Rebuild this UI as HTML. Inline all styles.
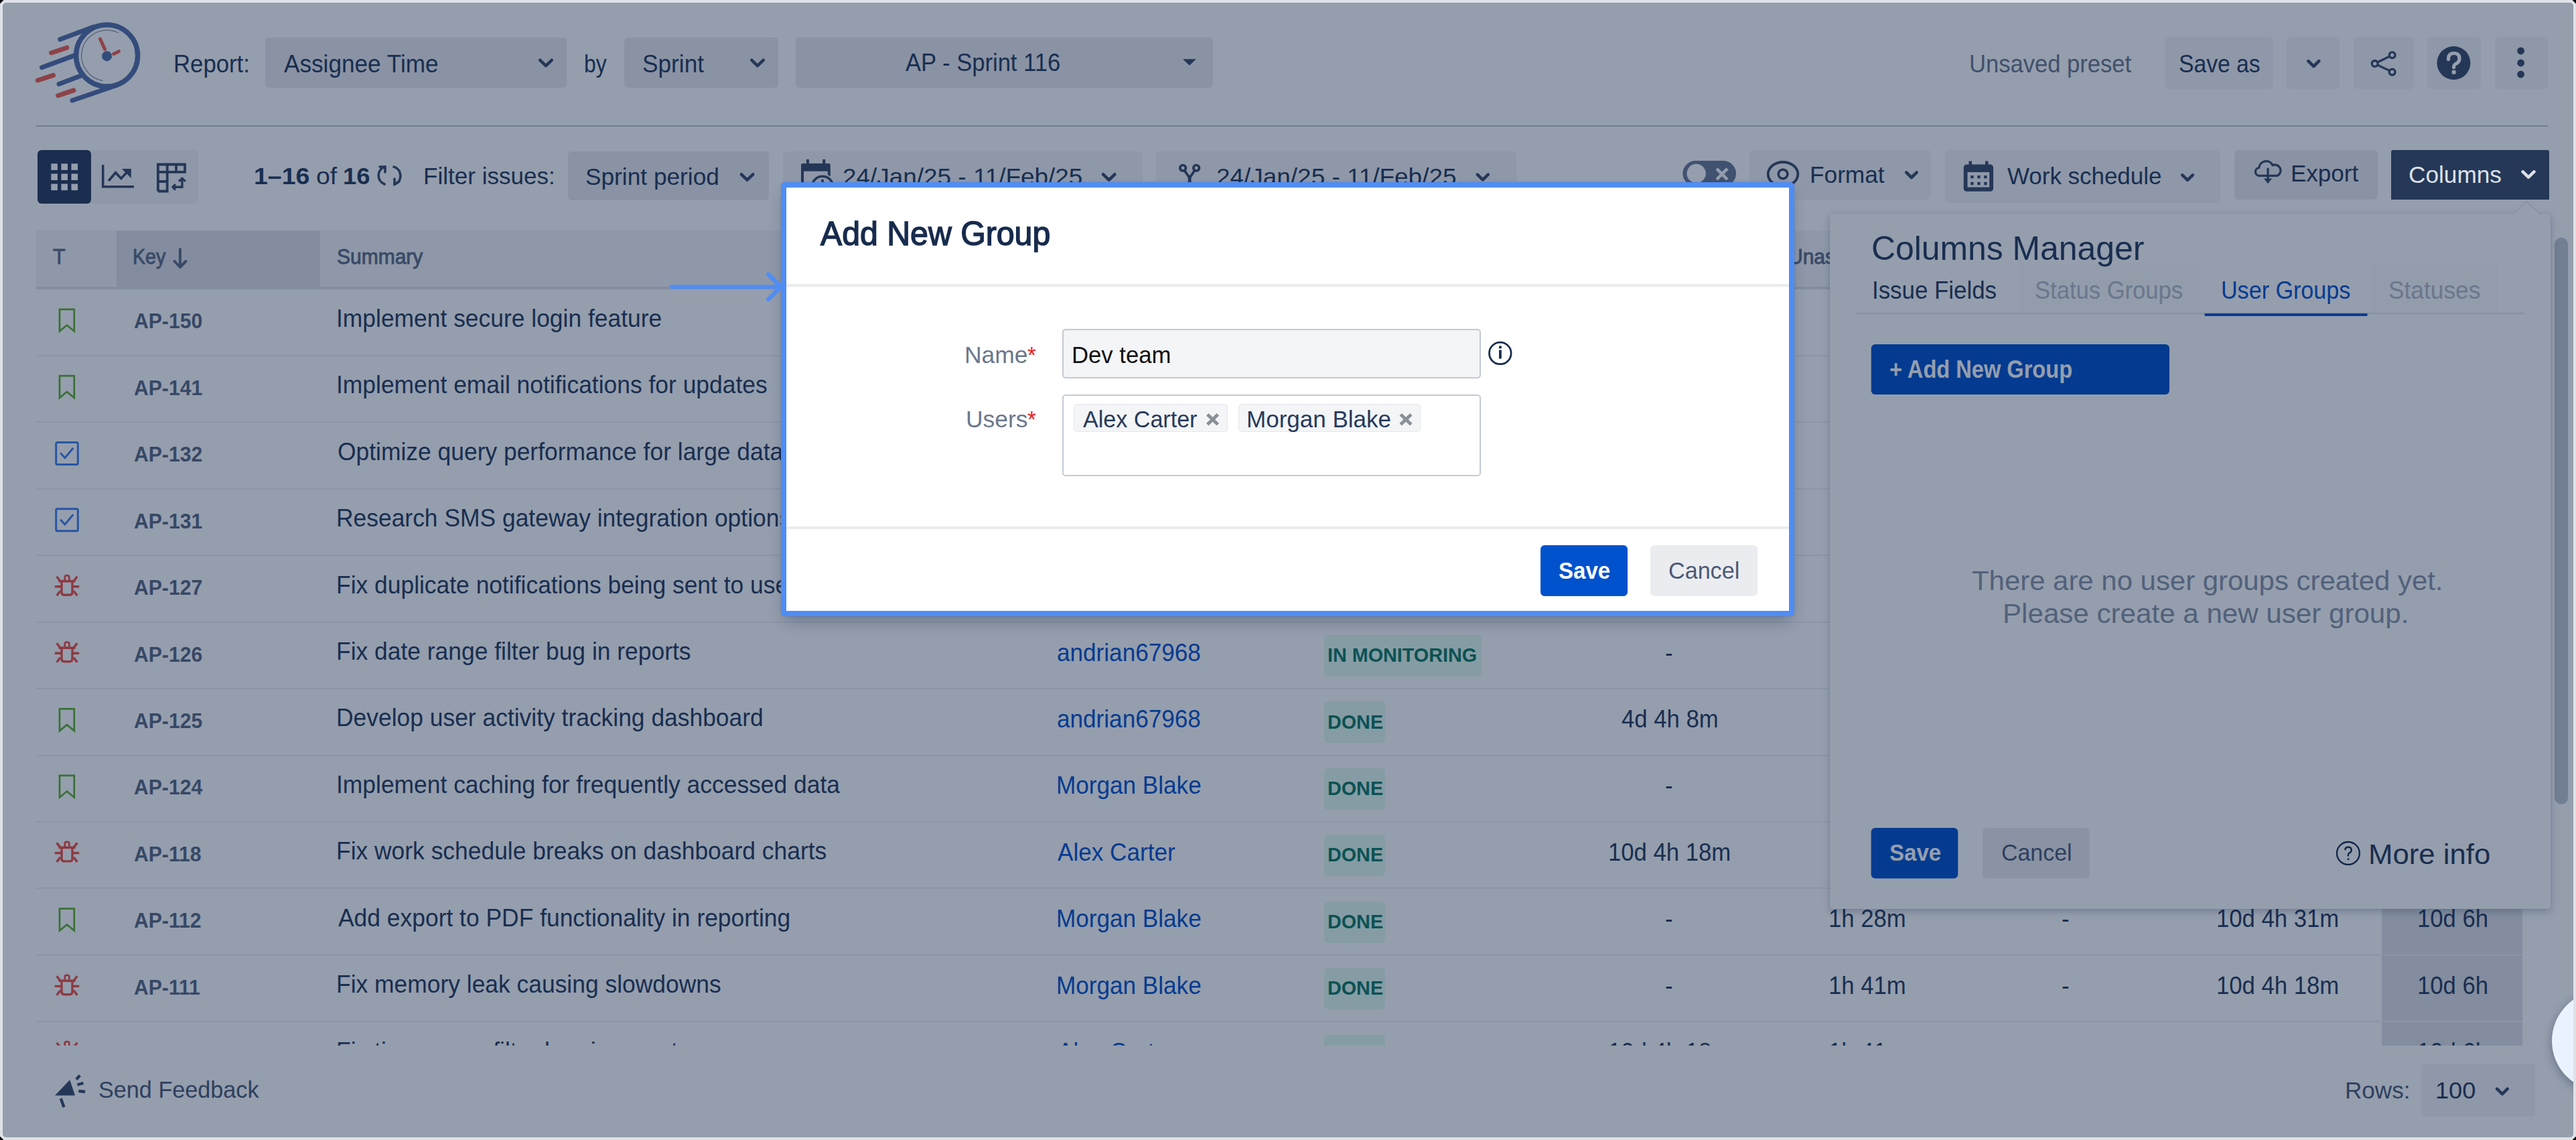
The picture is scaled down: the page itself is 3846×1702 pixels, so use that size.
<!DOCTYPE html>
<html><head><meta charset="utf-8"><style>
html,body{margin:0;padding:0;}
body{width:3846px;height:1702px;background:#000;position:relative;overflow:hidden;font-family:"Liberation Sans", sans-serif;}
.t{position:absolute;white-space:nowrap;line-height:1;transform-origin:0 0;}
.r{position:absolute;}
.full{position:absolute;left:0;top:0;}
#frame{position:absolute;left:0;top:0;width:3846px;height:1702px;background:#dfe1e6;clip-path:polygon(5.5px 0,calc(100% - 5.5px) 0,100% 5.5px,100% calc(100% - 5.5px),calc(100% - 5.5px) 100%,5.5px 100%,0 calc(100% - 5.5px),0 5.5px);}
#page{position:absolute;left:4px;top:4px;width:3838px;height:1694px;border-radius:5px;overflow:hidden;background:#fff;}
#inner{position:absolute;left:-4px;top:-4px;width:3846px;height:1702px;}
#clip{position:absolute;left:0;top:432px;width:3846px;height:1129px;overflow:hidden;}
#clipin{position:absolute;left:0;top:-432px;width:3846px;height:1702px;}
</style></head><body>
<div id="frame"></div>
<div id="page"><div id="inner">
<div class="r" style="left:396px;top:56px;width:450.00px;height:75.00px;background:#ebecf0;border-radius:6px;"></div><div class="r" style="left:932px;top:56px;width:229.60px;height:75.00px;background:#ebecf0;border-radius:6px;"></div><div class="r" style="left:1188px;top:56px;width:623.00px;height:75.00px;background:#ebecf0;border-radius:6px;"></div><div class="r" style="left:3232px;top:55px;width:162.00px;height:78.00px;background:#f4f5f7;border-radius:6px;"></div><div class="r" style="left:3414px;top:55px;width:79.00px;height:78.00px;background:#f4f5f7;border-radius:6px;"></div><div class="r" style="left:3514px;top:55px;width:90.00px;height:78.00px;background:#f4f5f7;border-radius:6px;"></div><div class="r" style="left:3624px;top:55px;width:80.00px;height:78.00px;background:#f4f5f7;border-radius:6px;"></div><div class="r" style="left:3724.5px;top:55px;width:79.00px;height:78.00px;background:#f4f5f7;border-radius:6px;"></div><div class="r" style="left:54px;top:187.2px;width:3750.00px;height:2.00px;background:#c1c7d0;border-radius:0px;"></div><div class="r" style="left:56px;top:224px;width:240.00px;height:80.00px;background:#f4f5f7;border-radius:6px;"></div><div class="r" style="left:56px;top:224px;width:80.00px;height:80.00px;background:#2a3b5c;border-radius:6px;"></div><div class="r" style="left:848px;top:226px;width:300.00px;height:73.00px;background:#ebecf0;border-radius:6px;"></div><div class="r" style="left:1168.5px;top:226px;width:537.00px;height:73.00px;background:#f4f5f7;border-radius:6px;"></div><div class="r" style="left:1726px;top:226px;width:538.00px;height:73.00px;background:#f4f5f7;border-radius:6px;"></div><div class="r" style="left:2612px;top:224px;width:271.40px;height:73.50px;background:#f4f5f7;border-radius:6px;"></div><div class="r" style="left:2904px;top:224px;width:411.20px;height:79.20px;background:#f4f5f7;border-radius:6px;"></div><div class="r" style="left:3336.3px;top:224px;width:213.40px;height:73.70px;background:#ebecf0;border-radius:6px;"></div><div class="r" style="left:54px;top:344px;width:3712.00px;height:84.00px;background:#f4f5f7;border-radius:0px;"></div><div class="r" style="left:174px;top:344px;width:304.00px;height:84.00px;background:#dfe1e6;border-radius:0px;"></div><div class="r" style="left:3556.3px;top:344px;width:209.40px;height:84.00px;background:#dfe1e6;border-radius:0px;"></div><div class="r" style="left:54px;top:428px;width:3712.00px;height:4.00px;background:#dfe1e6;border-radius:0px;"></div><div class="r" style="left:3615.3px;top:1588px;width:170.00px;height:78.80px;background:#f4f5f7;border-radius:6px;"></div>
<svg class="full" width="3846" height="1702" viewBox="0 0 3846 1702"><g fill="none" stroke-linecap="round"><circle cx="159.6" cy="83" r="46" stroke="#5570a8" stroke-width="7.5"/><circle cx="159.6" cy="83" r="38" stroke="#9aa3b3" stroke-width="1.5" stroke-dasharray="130 200" transform="rotate(100 159.6 83)"/><line x1="89.7" y1="58.8" x2="140" y2="40" stroke="#5570a8" stroke-width="7"/><line x1="62.5" y1="100.7" x2="111" y2="82.9" stroke="#5570a8" stroke-width="7"/><line x1="88" y1="125.6" x2="121" y2="113" stroke="#5570a8" stroke-width="7"/><line x1="108" y1="150" x2="175" y2="127" stroke="#5570a8" stroke-width="7"/><line x1="76.5" y1="79" x2="99.8" y2="71.2" stroke="#f0604f" stroke-width="7"/><line x1="56.3" y1="120" x2="79.6" y2="112.4" stroke="#f0604f" stroke-width="7"/><line x1="86.6" y1="142.7" x2="109.9" y2="134.9" stroke="#f0604f" stroke-width="7"/><line x1="149.5" y1="58" x2="156.5" y2="73.6" stroke="#f0604f" stroke-width="5"/><line x1="169.7" y1="80.6" x2="177.4" y2="76.7" stroke="#f0604f" stroke-width="5"/><circle cx="159.6" cy="83.7" r="7.5" fill="#5570a8" stroke="none"/></g><polyline points="806.3,89.8 815.0,98.2 823.7,89.8" fill="none" stroke="#3b4b69" stroke-width="4.6" stroke-linecap="round" stroke-linejoin="round"/><polyline points="1122.3,89.8 1131.0,98.2 1139.7,89.8" fill="none" stroke="#3b4b69" stroke-width="4.6" stroke-linecap="round" stroke-linejoin="round"/><polygon points="1766,88.3 1785.8,88.3 1775.9,97.8" fill="#3b4b69"/><polyline points="3446.3,91.2 3454.3,99.0 3462.3,91.2" fill="none" stroke="#3b4b69" stroke-width="4.6" stroke-linecap="round" stroke-linejoin="round"/><g fill="none" stroke="#3b4b69" stroke-width="3.3"><circle cx="3545.6" cy="94.9" r="4.4"/><circle cx="3571.6" cy="82.3" r="4.4"/><circle cx="3571.6" cy="107.6" r="4.4"/><line x1="3549.6" y1="92.9" x2="3567.6" y2="84.3"/><line x1="3549.6" y1="96.9" x2="3567.6" y2="105.6"/></g><circle cx="3663.4" cy="94" r="25" fill="#3b4b69"/><path d="M3655.5 88.5 q0 -9 8 -9 q8.5 0 8.5 8 q0 5 -5 7.5 q-3.5 1.8 -3.5 5.5" fill="none" stroke="#fff" stroke-width="5.2" stroke-linecap="round"/><circle cx="3663.6" cy="107.8" r="3.2" fill="#fff"/><circle cx="3763.6" cy="76" r="5.4" fill="#3b4b69"/><circle cx="3763.6" cy="94" r="5.4" fill="#3b4b69"/><circle cx="3763.6" cy="111" r="5.4" fill="#3b4b69"/><rect x="76.3" y="244.3" width="9.6" height="9.6" fill="#ffffff"/><rect x="76.3" y="259.4" width="9.6" height="9.6" fill="#ffffff"/><rect x="76.3" y="274.5" width="9.6" height="9.6" fill="#ffffff"/><rect x="91.4" y="244.3" width="9.6" height="9.6" fill="#ffffff"/><rect x="91.4" y="259.4" width="9.6" height="9.6" fill="#ffffff"/><rect x="91.4" y="274.5" width="9.6" height="9.6" fill="#ffffff"/><rect x="106.5" y="244.3" width="9.6" height="9.6" fill="#ffffff"/><rect x="106.5" y="259.4" width="9.6" height="9.6" fill="#ffffff"/><rect x="106.5" y="274.5" width="9.6" height="9.6" fill="#ffffff"/><g fill="none" stroke="#3b4b69" stroke-width="3.6" stroke-linejoin="miter"><polyline points="153.7,246 153.7,278.8 200,278.8"/><polyline points="162.1,270 172.6,257.8 180.8,266.4 192,254.5"/></g><polygon points="181.9,252.1 195.8,252.1 195.8,266" fill="#3b4b69"/><g fill="none" stroke="#3b4b69" stroke-width="3.8"><path d="M235.9 285.5 V245.5 H276 V256.8 H235.9 M249.7 243.6 V285.5 H235.9 M263 245.5 V256.8 M235.9 271 H249.7"/><path d="M260 279.2 H271.9 V267" stroke-width="3.4"/><polyline points="267,270.9 271.9,266.2 276.9,270.9" stroke-width="3.2"/><polyline points="261.9,275 257.8,279.2 261.9,283.6" stroke-width="3.2"/></g><g fill="none" stroke="#3b4b69" stroke-width="3.6" stroke-linecap="round"><path d="M574 249 A14 14 0 0 0 574 275"/><path d="M588 249 A14 14 0 0 1 590 275"/><polyline points="567,249 575,249 575,257" /><polyline points="596,271 589,275 589,267"/></g><polyline points="1106.9,260.3 1115.5,268.7 1124.2,260.3" fill="none" stroke="#3b4b69" stroke-width="4.6" stroke-linecap="round" stroke-linejoin="round"/><g fill="#3b4b69"><rect x="1196" y="243.9" width="43.8" height="44" rx="2.5"/><rect x="1203.9" y="237.9" width="4" height="8"/><rect x="1228.2" y="237.9" width="4" height="8"/></g><rect x="1200" y="255.7" width="35.8" height="28" fill="#f4f5f7"/><circle cx="1228" cy="278.8" r="19.3" fill="#f4f5f7"/><circle cx="1228" cy="278.8" r="15.6" fill="none" stroke="#3b4b69" stroke-width="3.6"/><rect x="1226.2" y="267.8" width="3.6" height="9" fill="#3b4b69"/><polyline points="1647.0,260.3 1655.7,268.7 1664.3,260.3" fill="none" stroke="#3b4b69" stroke-width="4.6" stroke-linecap="round" stroke-linejoin="round"/><g fill="none" stroke="#3b4b69" stroke-width="3.7"><circle cx="1766.1" cy="250.8" r="4.3"/><circle cx="1786.1" cy="250.8" r="4.3"/><path d="M1768.6 254.6 L1776.1 265.5 L1783.6 254.6"/><path d="M1776.1 264 V285" stroke-width="4.8"/></g><polyline points="2205.9,260.7 2213.8,268.3 2221.7,260.7" fill="none" stroke="#3b4b69" stroke-width="4.6" stroke-linecap="round" stroke-linejoin="round"/><rect x="2512.4" y="240.1" width="79.6" height="38" rx="19" fill="#6b7a94"/><circle cx="2532.6" cy="259" r="14.2" fill="#ffffff"/><g stroke="#ffffff" stroke-width="4.6" stroke-linecap="butt"><line x1="2563" y1="251.8" x2="2579" y2="268"/><line x1="2579" y1="251.8" x2="2563" y2="268"/></g><g fill="none" stroke="#3b4b69" stroke-width="3.8"><ellipse cx="2662" cy="260" rx="22.3" ry="18"/><circle cx="2662" cy="259.9" r="6.8" stroke-width="3.6"/></g><polyline points="2846.1,257.4 2853.9,265.0 2861.7,257.4" fill="none" stroke="#3b4b69" stroke-width="4.6" stroke-linecap="round" stroke-linejoin="round"/><g fill="#3b4b69"><rect x="2931.7" y="245.5" width="44.3" height="40.2" rx="4.5"/><rect x="2939.5" y="240.5" width="4.5" height="8"/><rect x="2964" y="240.5" width="4.5" height="8"/></g><rect x="2937.5" y="257" width="32.7" height="22.5" fill="#f4f5f7"/><rect x="2942.2" y="262.0" width="4.4" height="4.4" fill="#3b4b69"/><rect x="2942.2" y="271.8" width="4.4" height="4.4" fill="#3b4b69"/><rect x="2952.2" y="262.0" width="4.4" height="4.4" fill="#3b4b69"/><rect x="2952.2" y="271.8" width="4.4" height="4.4" fill="#3b4b69"/><rect x="2962.2" y="262.0" width="4.4" height="4.4" fill="#3b4b69"/><rect x="2962.2" y="271.8" width="4.4" height="4.4" fill="#3b4b69"/><polyline points="3258.3,261.4 3266.0,268.8 3273.7,261.4" fill="none" stroke="#3b4b69" stroke-width="4.6" stroke-linecap="round" stroke-linejoin="round"/><g fill="none" stroke="#3b4b69" stroke-width="3.3" stroke-linejoin="round"><path d="M3400 262.3 H3372.5 A6 6 0 0 1 3372.8 250.4 A10.6 10.6 0 0 1 3393 246.8 A8.3 8.3 0 0 1 3400 262.3 Z"/><line x1="3386" y1="250.7" x2="3386" y2="268"/></g><polygon points="3379.8,266.5 3392.2,266.5 3386,274.3" fill="#3b4b69"/><g fill="none" stroke="#5e6c84" stroke-width="4" stroke-linecap="round" stroke-linejoin="round"><line x1="268.9" y1="372" x2="268.9" y2="398"/><polyline points="260.5,390 268.9,399 277.5,390"/></g><g fill="#3b4b69"><path d="M82 1635.5 L104.3 1612.3 L112 1635.5 Z"/></g><g stroke="#3b4b69" stroke-width="4.3" stroke-linecap="butt"><line x1="113.9" y1="1611.5" x2="119.3" y2="1605.5"/><line x1="115.5" y1="1619.5" x2="124.5" y2="1617"/><line x1="117.3" y1="1628.8" x2="127" y2="1630"/><line x1="90.8" y1="1640" x2="95.5" y2="1653"/></g><polyline points="3728.1,1625.7 3735.9,1633.3 3743.7,1625.7" fill="none" stroke="#3b4b69" stroke-width="4.6" stroke-linecap="round" stroke-linejoin="round"/><rect x="3814" y="354.7" width="20" height="846" rx="10" fill="#c1c7d0"/></svg>
<div class="t" style="left:259.15px;top:77.60px;font-size:36.5px;color:#263a5c;transform:scaleX(0.9511);">Report:</div><div class="t" style="left:424.00px;top:78.20px;font-size:36.5px;color:#263a5c;transform:scaleX(0.9634);">Assignee Time</div><div class="t" style="left:872.25px;top:77.90px;font-size:36.5px;color:#263a5c;transform:scaleX(0.8740);">by</div><div class="t" style="left:959.03px;top:78.10px;font-size:36.5px;color:#263a5c;transform:scaleX(0.9659);">Sprint</div><div class="t" style="left:1352.00px;top:75.76px;font-size:36.2px;color:#263a5c;transform:scaleX(0.9549);">AP - Sprint 116</div><div class="t" style="left:2939.71px;top:77.50px;font-size:36.5px;color:#6b778c;transform:scaleX(0.9471);">Unsaved preset</div><div class="t" style="left:3253.08px;top:77.70px;font-size:36.5px;color:#263a5c;transform:scaleX(0.9226);">Save as</div><div class="t" style="left:379.49px;top:246.36px;font-size:35.6px;color:#263a5c;font-weight:700;transform:scaleX(1.0529);">1–16</div><div class="t" style="left:471.65px;top:246.36px;font-size:35.6px;color:#263a5c;transform:scaleX(1.0526);">of</div><div class="t" style="left:512.26px;top:246.36px;font-size:35.6px;color:#263a5c;font-weight:700;transform:scaleX(1.0194);">16</div><div class="t" style="left:632.03px;top:246.36px;font-size:35.6px;color:#263a5c;transform:scaleX(0.9857);">Filter issues:</div><div class="t" style="left:874.41px;top:246.66px;font-size:35.6px;color:#263a5c;transform:scaleX(0.9908);">Sprint period</div><div class="t" style="left:1257.96px;top:247.16px;font-size:35.6px;color:#263a5c;transform:scaleX(1.0373);">24/Jan/25 - 11/Feb/25</div><div class="t" style="left:1815.96px;top:247.16px;font-size:35.6px;color:#263a5c;transform:scaleX(1.0376);">24/Jan/25 - 11/Feb/25</div><div class="t" style="left:2702.44px;top:244.11px;font-size:35.9px;color:#263a5c;transform:scaleX(0.9821);">Format</div><div class="t" style="left:2996.50px;top:245.91px;font-size:35.9px;color:#263a5c;transform:scaleX(0.9730);">Work schedule</div><div class="t" style="left:3420.45px;top:242.21px;font-size:35.9px;color:#263a5c;transform:scaleX(0.9759);">Export</div><div class="t" style="left:79.00px;top:368.81px;font-size:30.7px;color:#5e6c84;transform:scaleX(0.9895);-webkit-text-stroke:0.9px #5e6c84;">T</div><div class="t" style="left:198.14px;top:368.81px;font-size:30.7px;color:#5e6c84;transform:scaleX(0.9314);-webkit-text-stroke:0.9px #5e6c84;">Key</div><div class="t" style="left:503.02px;top:368.81px;font-size:30.7px;color:#5e6c84;transform:scaleX(0.9775);-webkit-text-stroke:0.9px #5e6c84;">Summary</div><div class="t" style="left:2670.05px;top:368.81px;font-size:30.7px;color:#5e6c84;transform:scaleX(0.9775);-webkit-text-stroke:0.9px #5e6c84;">Unassigned time</div><div class="t" style="left:146.74px;top:1610.10px;font-size:35.8px;color:#4a5a76;transform:scaleX(0.9554);">Send Feedback</div><div class="t" style="left:3501.04px;top:1610.90px;font-size:35.8px;color:#4a5a76;transform:scaleX(0.9798);">Rows:</div><div class="t" style="left:3635.68px;top:1610.90px;font-size:35.8px;color:#263a5c;transform:scaleX(1.0085);">100</div>
<div id="clip"><div id="clipin"><div class="r" style="left:3556.3px;top:432px;width:209.40px;height:1129.00px;background:#dfe1e6;border-radius:0px;"></div><div class="r" style="left:54px;top:530.0px;width:3712.00px;height:2.00px;background:#eef0f2;border-radius:0px;"></div><div class="r" style="left:54px;top:629.4300000000001px;width:3712.00px;height:2.00px;background:#eef0f2;border-radius:0px;"></div><div class="r" style="left:54px;top:728.86px;width:3712.00px;height:2.00px;background:#eef0f2;border-radius:0px;"></div><div class="r" style="left:54px;top:828.29px;width:3712.00px;height:2.00px;background:#eef0f2;border-radius:0px;"></div><div class="r" style="left:54px;top:927.72px;width:3712.00px;height:2.00px;background:#eef0f2;border-radius:0px;"></div><div class="r" style="left:54px;top:1027.15px;width:3712.00px;height:2.00px;background:#eef0f2;border-radius:0px;"></div><div class="r" style="left:54px;top:1126.58px;width:3712.00px;height:2.00px;background:#eef0f2;border-radius:0px;"></div><div class="r" style="left:54px;top:1226.01px;width:3712.00px;height:2.00px;background:#eef0f2;border-radius:0px;"></div><div class="r" style="left:54px;top:1325.44px;width:3712.00px;height:2.00px;background:#eef0f2;border-radius:0px;"></div><div class="r" style="left:54px;top:1424.8700000000001px;width:3712.00px;height:2.00px;background:#eef0f2;border-radius:0px;"></div><div class="r" style="left:54px;top:1524.3000000000002px;width:3712.00px;height:2.00px;background:#eef0f2;border-radius:0px;"></div><div class="r" style="left:1976.6px;top:948.0px;width:235.00px;height:61.80px;background:#e3fcef;border-radius:6px;"></div><div class="r" style="left:1976.6px;top:1047.43px;width:91.40px;height:61.80px;background:#e3fcef;border-radius:6px;"></div><div class="r" style="left:1976.6px;top:1146.86px;width:91.40px;height:61.80px;background:#e3fcef;border-radius:6px;"></div><div class="r" style="left:1976.6px;top:1246.29px;width:91.40px;height:61.80px;background:#e3fcef;border-radius:6px;"></div><div class="r" style="left:1976.6px;top:1345.72px;width:91.40px;height:61.80px;background:#e3fcef;border-radius:6px;"></div><div class="r" style="left:1976.6px;top:1445.15px;width:91.40px;height:61.80px;background:#e3fcef;border-radius:6px;"></div><div class="r" style="left:1976.6px;top:1544.58px;width:91.40px;height:61.80px;background:#e3fcef;border-radius:6px;"></div><svg class="full" width="3846" height="1702" viewBox="0 0 3846 1702"><path d="M89 461.8 H110.8 V494.5 L99.9 485.5 L89 494.5 Z" fill="none" stroke="#5fae2e" stroke-width="2.7" stroke-linejoin="miter"/><path d="M89 561.2 H110.8 V593.9 L99.9 584.9 L89 593.9 Z" fill="none" stroke="#5fae2e" stroke-width="2.7" stroke-linejoin="miter"/><rect x="83.7" y="660.4" width="32.6" height="33" rx="2" fill="none" stroke="#3f7ff0" stroke-width="3"/><polyline points="91.2,677.4 96.9,683.6 108.4,669.9" fill="none" stroke="#3f7ff0" stroke-width="3" stroke-linecap="square"/><rect x="83.7" y="759.8" width="32.6" height="33" rx="2" fill="none" stroke="#3f7ff0" stroke-width="3"/><polyline points="91.2,776.8 96.9,783.0 108.4,769.3" fill="none" stroke="#3f7ff0" stroke-width="3" stroke-linecap="square"/><g fill="none" stroke="#ef4f43" stroke-width="3.4" stroke-linecap="butt"><path d="M96.8 866.2 V861.4 Q96.8 859.2 100 859.2 Q103.3 859.2 103.3 861.4 V866.2" stroke-width="2.8"/><path d="M87.5 867.7 H112.5" stroke-width="3.6"/><path d="M92 867.7 V884.2 Q92 888.2 96 888.2 H104 Q108 888.2 108 884.2 V867.7"/><path d="M84.7 860.7 L90 867.7 M115.3 860.7 L110 867.7 M81.8 875.8 H92 M108 875.8 H118.2 M90 882.2 L84.7 889.2 M110 882.2 L115.3 889.2"/></g><g fill="none" stroke="#ef4f43" stroke-width="3.4" stroke-linecap="butt"><path d="M96.8 965.7 V960.9 Q96.8 958.7 100 958.7 Q103.3 958.7 103.3 960.9 V965.7" stroke-width="2.8"/><path d="M87.5 967.2 H112.5" stroke-width="3.6"/><path d="M92 967.2 V983.7 Q92 987.7 96 987.7 H104 Q108 987.7 108 983.7 V967.2"/><path d="M84.7 960.2 L90 967.2 M115.3 960.2 L110 967.2 M81.8 975.3 H92 M108 975.3 H118.2 M90 981.7 L84.7 988.7 M110 981.7 L115.3 988.7"/></g><path d="M89 1058.4 H110.8 V1091.1 L99.9 1082.1 L89 1091.1 Z" fill="none" stroke="#5fae2e" stroke-width="2.7" stroke-linejoin="miter"/><path d="M89 1157.8 H110.8 V1190.5 L99.9 1181.5 L89 1190.5 Z" fill="none" stroke="#5fae2e" stroke-width="2.7" stroke-linejoin="miter"/><g fill="none" stroke="#ef4f43" stroke-width="3.4" stroke-linecap="butt"><path d="M96.8 1263.9 V1259.1 Q96.8 1256.9 100 1256.9 Q103.3 1256.9 103.3 1259.1 V1263.9" stroke-width="2.8"/><path d="M87.5 1265.4 H112.5" stroke-width="3.6"/><path d="M92 1265.4 V1281.9 Q92 1285.9 96 1285.9 H104 Q108 1285.9 108 1281.9 V1265.4"/><path d="M84.7 1258.4 L90 1265.4 M115.3 1258.4 L110 1265.4 M81.8 1273.5 H92 M108 1273.5 H118.2 M90 1279.9 L84.7 1286.9 M110 1279.9 L115.3 1286.9"/></g><path d="M89 1356.7 H110.8 V1389.4 L99.9 1380.4 L89 1389.4 Z" fill="none" stroke="#5fae2e" stroke-width="2.7" stroke-linejoin="miter"/><g fill="none" stroke="#ef4f43" stroke-width="3.4" stroke-linecap="butt"><path d="M96.8 1462.8 V1458.0 Q96.8 1455.8 100 1455.8 Q103.3 1455.8 103.3 1458.0 V1462.8" stroke-width="2.8"/><path d="M87.5 1464.3 H112.5" stroke-width="3.6"/><path d="M92 1464.3 V1480.8 Q92 1484.8 96 1484.8 H104 Q108 1484.8 108 1480.8 V1464.3"/><path d="M84.7 1457.3 L90 1464.3 M115.3 1457.3 L110 1464.3 M81.8 1472.4 H92 M108 1472.4 H118.2 M90 1478.8 L84.7 1485.8 M110 1478.8 L115.3 1485.8"/></g><g fill="none" stroke="#ef4f43" stroke-width="3.4" stroke-linecap="butt"><path d="M96.8 1562.2 V1557.4 Q96.8 1555.2 100 1555.2 Q103.3 1555.2 103.3 1557.4 V1562.2" stroke-width="2.8"/><path d="M87.5 1563.7 H112.5" stroke-width="3.6"/><path d="M92 1563.7 V1580.2 Q92 1584.2 96 1584.2 H104 Q108 1584.2 108 1580.2 V1563.7"/><path d="M84.7 1556.7 L90 1563.7 M115.3 1556.7 L110 1563.7 M81.8 1571.8 H92 M108 1571.8 H118.2 M90 1578.2 L84.7 1585.2 M110 1578.2 L115.3 1585.2"/></g></svg><div class="t" style="left:200.30px;top:464.48px;font-size:30.5px;color:#5a6883;font-weight:700;transform:scaleX(0.9878);">AP-150</div><div class="t" style="left:502.09px;top:457.90px;font-size:36.5px;color:#263a5c;transform:scaleX(0.9702);">Implement secure login feature</div><div class="t" style="left:200.30px;top:563.91px;font-size:30.5px;color:#5a6883;font-weight:700;transform:scaleX(0.9878);">AP-141</div><div class="t" style="left:502.09px;top:557.33px;font-size:36.5px;color:#263a5c;transform:scaleX(0.9702);">Implement email notifications for updates</div><div class="t" style="left:200.30px;top:663.34px;font-size:30.5px;color:#5a6883;font-weight:700;transform:scaleX(0.9878);">AP-132</div><div class="t" style="left:504.03px;top:656.76px;font-size:36.5px;color:#263a5c;transform:scaleX(0.9702);">Optimize query performance for large datasets</div><div class="t" style="left:200.30px;top:762.77px;font-size:30.5px;color:#5a6883;font-weight:700;transform:scaleX(0.9878);">AP-131</div><div class="t" style="left:502.09px;top:756.19px;font-size:36.5px;color:#263a5c;transform:scaleX(0.9702);">Research SMS gateway integration options</div><div class="t" style="left:200.30px;top:862.20px;font-size:30.5px;color:#5a6883;font-weight:700;transform:scaleX(0.9878);">AP-127</div><div class="t" style="left:502.09px;top:855.62px;font-size:36.5px;color:#263a5c;transform:scaleX(0.9702);">Fix duplicate notifications being sent to users</div><div class="t" style="left:200.30px;top:961.63px;font-size:30.5px;color:#5a6883;font-weight:700;transform:scaleX(0.9878);">AP-126</div><div class="t" style="left:502.09px;top:955.05px;font-size:36.5px;color:#263a5c;transform:scaleX(0.9702);">Fix date range filter bug in reports</div><div class="t" style="left:1578.44px;top:956.60px;font-size:36.5px;color:#0052cc;transform:scaleX(0.9622);">andrian67968</div><div class="t" style="left:2486.30px;top:956.60px;font-size:36.5px;color:#263a5c;transform:scaleX(0.9500);">-</div><div class="t" style="left:200.30px;top:1061.06px;font-size:30.5px;color:#5a6883;font-weight:700;transform:scaleX(0.9878);">AP-125</div><div class="t" style="left:502.09px;top:1054.48px;font-size:36.5px;color:#263a5c;transform:scaleX(0.9702);">Develop user activity tracking dashboard</div><div class="t" style="left:1578.44px;top:1056.03px;font-size:36.5px;color:#0052cc;transform:scaleX(0.9622);">andrian67968</div><div class="t" style="left:2420.85px;top:1056.03px;font-size:36.5px;color:#263a5c;transform:scaleX(0.9500);">4d 4h 8m</div><div class="t" style="left:200.30px;top:1160.49px;font-size:30.5px;color:#5a6883;font-weight:700;transform:scaleX(0.9878);">AP-124</div><div class="t" style="left:502.09px;top:1153.91px;font-size:36.5px;color:#263a5c;transform:scaleX(0.9702);">Implement caching for frequently accessed data</div><div class="t" style="left:1576.51px;top:1155.46px;font-size:36.5px;color:#0052cc;transform:scaleX(0.9622);">Morgan Blake</div><div class="t" style="left:2486.30px;top:1155.46px;font-size:36.5px;color:#263a5c;transform:scaleX(0.9500);">-</div><div class="t" style="left:200.30px;top:1259.92px;font-size:30.5px;color:#5a6883;font-weight:700;transform:scaleX(0.9878);">AP-118</div><div class="t" style="left:502.09px;top:1253.34px;font-size:36.5px;color:#263a5c;transform:scaleX(0.9702);">Fix work schedule breaks on dashboard charts</div><div class="t" style="left:1579.40px;top:1254.89px;font-size:36.5px;color:#0052cc;transform:scaleX(0.9622);">Alex Carter</div><div class="t" style="left:2400.62px;top:1254.89px;font-size:36.5px;color:#263a5c;transform:scaleX(0.9500);">10d 4h 18m</div><div class="t" style="left:200.30px;top:1359.35px;font-size:30.5px;color:#5a6883;font-weight:700;transform:scaleX(0.9878);">AP-112</div><div class="t" style="left:505.00px;top:1352.77px;font-size:36.5px;color:#263a5c;transform:scaleX(0.9702);">Add export to PDF functionality in reporting</div><div class="t" style="left:1576.51px;top:1354.32px;font-size:36.5px;color:#0052cc;transform:scaleX(0.9622);">Morgan Blake</div><div class="t" style="left:2486.30px;top:1354.32px;font-size:36.5px;color:#263a5c;transform:scaleX(0.9500);">-</div><div class="t" style="left:2730.36px;top:1354.32px;font-size:36.5px;color:#263a5c;transform:scaleX(0.9500);">1h 28m</div><div class="t" style="left:3078.00px;top:1354.32px;font-size:36.5px;color:#263a5c;transform:scaleX(0.9500);">-</div><div class="t" style="left:3308.62px;top:1354.32px;font-size:36.5px;color:#263a5c;transform:scaleX(0.9500);">10d 4h 31m</div><div class="t" style="left:3609.11px;top:1354.32px;font-size:36.5px;color:#263a5c;transform:scaleX(0.9500);">10d 6h</div><div class="t" style="left:200.30px;top:1458.78px;font-size:30.5px;color:#5a6883;font-weight:700;transform:scaleX(0.9878);">AP-111</div><div class="t" style="left:502.09px;top:1452.20px;font-size:36.5px;color:#263a5c;transform:scaleX(0.9702);">Fix memory leak causing slowdowns</div><div class="t" style="left:1576.51px;top:1453.75px;font-size:36.5px;color:#0052cc;transform:scaleX(0.9622);">Morgan Blake</div><div class="t" style="left:2486.30px;top:1453.75px;font-size:36.5px;color:#263a5c;transform:scaleX(0.9500);">-</div><div class="t" style="left:2730.36px;top:1453.75px;font-size:36.5px;color:#263a5c;transform:scaleX(0.9500);">1h 41m</div><div class="t" style="left:3078.00px;top:1453.75px;font-size:36.5px;color:#263a5c;transform:scaleX(0.9500);">-</div><div class="t" style="left:3308.62px;top:1453.75px;font-size:36.5px;color:#263a5c;transform:scaleX(0.9500);">10d 4h 18m</div><div class="t" style="left:3609.11px;top:1453.75px;font-size:36.5px;color:#263a5c;transform:scaleX(0.9500);">10d 6h</div><div class="t" style="left:200.30px;top:1558.21px;font-size:30.5px;color:#5a6883;font-weight:700;transform:scaleX(0.9878);">AP-110</div><div class="t" style="left:502.09px;top:1551.63px;font-size:36.5px;color:#263a5c;transform:scaleX(0.9702);">Fix time range filter bug in reports</div><div class="t" style="left:1579.40px;top:1553.18px;font-size:36.5px;color:#0052cc;transform:scaleX(0.9622);">Alex Carter</div><div class="t" style="left:2400.62px;top:1553.18px;font-size:36.5px;color:#263a5c;transform:scaleX(0.9500);">10d 4h 18m</div><div class="t" style="left:2730.36px;top:1553.18px;font-size:36.5px;color:#263a5c;transform:scaleX(0.9500);">1h 41m</div><div class="t" style="left:3078.00px;top:1553.18px;font-size:36.5px;color:#263a5c;transform:scaleX(0.9500);">-</div><div class="t" style="left:3394.30px;top:1553.18px;font-size:36.5px;color:#263a5c;transform:scaleX(0.9500);">-</div><div class="t" style="left:3609.11px;top:1553.18px;font-size:36.5px;color:#263a5c;transform:scaleX(0.9500);">10d 6h</div><div class="t" style="left:1982.07px;top:963.17px;font-size:29.8px;color:#0e7a62;font-weight:700;transform:scaleX(0.9648);">IN MONITORING</div><div class="t" style="left:1982.07px;top:1062.60px;font-size:29.8px;color:#0e7a62;font-weight:700;transform:scaleX(0.9648);">DONE</div><div class="t" style="left:1982.07px;top:1162.03px;font-size:29.8px;color:#0e7a62;font-weight:700;transform:scaleX(0.9648);">DONE</div><div class="t" style="left:1982.07px;top:1261.46px;font-size:29.8px;color:#0e7a62;font-weight:700;transform:scaleX(0.9648);">DONE</div><div class="t" style="left:1982.07px;top:1360.89px;font-size:29.8px;color:#0e7a62;font-weight:700;transform:scaleX(0.9648);">DONE</div><div class="t" style="left:1982.07px;top:1460.32px;font-size:29.8px;color:#0e7a62;font-weight:700;transform:scaleX(0.9648);">DONE</div><div class="t" style="left:1982.07px;top:1559.75px;font-size:29.8px;color:#0e7a62;font-weight:700;transform:scaleX(0.9648);">DONE</div></div></div>
<div class="r" style="left:2732px;top:319px;width:1076px;height:1038px;background:#fff;box-shadow:0 4px 12px rgba(9,30,66,0.25),0 0 1px rgba(9,30,66,0.31);border-radius:0 0 4px 4px;"></div>
<svg class="full" width="3846" height="1702" viewBox="0 0 3846 1702"><polygon points="3752.5,319.5 3772,300 3791.8,319.5" fill="#fff" stroke="#dfe1e6" stroke-width="1.2"/><rect x="3753.5" y="318" width="37" height="3" fill="#fff"/><rect x="3014" y="395" width="272" height="73" fill="#fafbfc"/><rect x="3539" y="395" width="190.5" height="73" fill="#fafbfc"/><rect x="2770" y="466.5" width="999" height="3" fill="#ebecf0"/><rect x="3291.5" y="467.9" width="243" height="4" fill="#0052cc"/><rect x="2793.7" y="513.9" width="445.3" height="75.1" rx="6" fill="#0052cc"/><rect x="2793.6" y="1236.1" width="129.7" height="75.4" rx="6" fill="#0052cc"/><rect x="2960" y="1236.1" width="159.7" height="75.4" rx="6" fill="#ebecf0"/><circle cx="3505.9" cy="1273.9" r="16.9" fill="none" stroke="#172b4d" stroke-width="2.3"/><path d="M3501.3 1269.3 q0 -4.6 4.7 -4.6 q4.7 0 4.7 4.4 q0 2.9 -2.9 4.3 q-1.9 0.9 -1.9 3.2 v1.8" fill="none" stroke="#172b4d" stroke-width="2.5" stroke-linecap="butt"/><rect x="3504.7" y="1281.4" width="2.6" height="2.6" fill="#172b4d"/></svg>
<div class="t" style="left:2794.02px;top:345.82px;font-size:50.3px;color:#263a5c;transform:scaleX(0.9912);">Columns Manager</div><div class="t" style="left:2795.12px;top:416.07px;font-size:36.3px;color:#263a5c;transform:scaleX(0.9604);">Issue Fields</div><div class="t" style="left:3038.05px;top:416.07px;font-size:36.3px;color:#b3bac5;transform:scaleX(0.9527);">Status Groups</div><div class="t" style="left:3315.52px;top:416.07px;font-size:36.3px;color:#0052cc;transform:scaleX(0.9393);">User Groups</div><div class="t" style="left:3565.73px;top:416.07px;font-size:36.3px;color:#b3bac5;transform:scaleX(0.9728);">Statuses</div><div class="t" style="left:2820.80px;top:533.87px;font-size:36.3px;color:#ffffff;font-weight:700;transform:scaleX(0.8977);">+ Add New Group</div><div class="t" style="left:2943.50px;top:846.92px;font-size:40.5px;color:#8a95a8;transform:scaleX(1.0347);">There are no user groups created yet.</div><div class="t" style="left:2990.48px;top:895.72px;font-size:40.5px;color:#8a95a8;transform:scaleX(1.0400);">Please create a new user group.</div><div class="t" style="left:2821.07px;top:1256.36px;font-size:35.6px;color:#ffffff;font-weight:700;transform:scaleX(0.9286);">Save</div><div class="t" style="left:2987.65px;top:1256.36px;font-size:35.6px;color:#4a5a76;transform:scaleX(0.9532);">Cancel</div><div class="t" style="left:3536.38px;top:1255.25px;font-size:42px;color:#263a5c;transform:scaleX(1.0415);">More info</div>
<div id="overlay" class="r" style="left:0;top:0;width:3846px;height:1702px;background:rgba(9,30,66,0.43);"></div>
<div class="r" style="left:3570px;top:224px;width:236.00px;height:73.70px;background:#253858;border-radius:0px;border-radius:3px 3px 0 0;"></div><div class="r" style="left:1166px;top:272px;width:1513px;height:648px;background:#4f8df5;border-radius:6px;box-shadow:0 12px 22px -6px rgba(9,30,66,0.32),0 0 2px rgba(9,30,66,0.2);"></div><div class="r" style="left:1174px;top:280px;width:1497.00px;height:632.00px;background:#ffffff;border-radius:0px;"></div><div class="r" style="left:1174px;top:424px;width:1497.00px;height:4.00px;background:#ebecf0;border-radius:0px;"></div><div class="r" style="left:1174px;top:786px;width:1497.00px;height:4.00px;background:#ebecf0;border-radius:0px;"></div><div class="r" style="left:1586px;top:490.5px;width:625.40px;height:74.50px;background:#f4f5f7;border-radius:5px;box-sizing:border-box;border:2px solid #c4cad3;"></div><div class="r" style="left:1586px;top:588.5px;width:625.40px;height:122.50px;background:#ffffff;border-radius:5px;box-sizing:border-box;border:2px solid #c4cad3;"></div><div class="r" style="left:1602.6px;top:602.6px;width:230.40px;height:42.70px;background:#f4f5f7;border-radius:5px;box-sizing:border-box;border:1.5px solid #e4e6ea;"></div><div class="r" style="left:1848.6px;top:602.6px;width:272.40px;height:42.70px;background:#f4f5f7;border-radius:5px;box-sizing:border-box;border:1.5px solid #e4e6ea;"></div><div class="r" style="left:2300px;top:814px;width:129.60px;height:75.80px;background:#0052cc;border-radius:6px;"></div><div class="r" style="left:2464px;top:814px;width:159.80px;height:75.80px;background:#ebecf0;border-radius:6px;"></div>
<svg class="full" width="3846" height="1702" viewBox="0 0 3846 1702"><polyline points="3766.6,256.4 3775.0,264.6 3783.4,256.4" fill="none" stroke="#dde1e8" stroke-width="4.6" stroke-linecap="round" stroke-linejoin="round"/><circle cx="2239.8" cy="527.4" r="16.3" fill="none" stroke="#172b4d" stroke-width="2.8"/><rect x="2238" y="522.5" width="3.8" height="13" fill="#172b4d"/><rect x="2238" y="516.5" width="3.8" height="3.8" fill="#172b4d"/><g stroke="#8a8f98" stroke-width="5" stroke-linecap="square"><line x1="1804.5" y1="620.5" x2="1816.5" y2="632"/><line x1="1816.5" y1="620.5" x2="1804.5" y2="632"/></g><g stroke="#8a8f98" stroke-width="5" stroke-linecap="square"><line x1="2093" y1="620.5" x2="2105" y2="632"/><line x1="2105" y1="620.5" x2="2093" y2="632"/></g><g stroke="#4f8df5" stroke-width="6" stroke-linecap="round" fill="none"><line x1="1003" y1="428.2" x2="1163" y2="428.2"/><line x1="1147" y1="409.5" x2="1165" y2="427"/><line x1="1147" y1="447" x2="1165" y2="429.5"/></g></svg>
<div class="t" style="left:3596.02px;top:244.01px;font-size:35.9px;color:#dde1e8;transform:scaleX(0.9809);">Columns</div><div class="t" style="left:1225.00px;top:324.02px;font-size:50.3px;color:#172b4d;transform:scaleX(0.9593);-webkit-text-stroke:1.5px #172b4d;">Add New Group</div><div class="t" style="left:1439.64px;top:513.38px;font-size:34.4px;color:#6b778c;transform:scaleX(1.0304);">Name</div><div class="t" style="left:1534.00px;top:513.38px;font-size:34.4px;color:#ee1c1c;transform:scaleX(0.9500);">*</div><div class="t" style="left:1441.94px;top:609.08px;font-size:34.4px;color:#6b778c;transform:scaleX(1.0299);">Users</div><div class="t" style="left:1534.00px;top:609.08px;font-size:34.4px;color:#ee1c1c;transform:scaleX(0.9500);">*</div><div class="t" style="left:1599.98px;top:513.38px;font-size:34.4px;color:#111111;transform:scaleX(1.0089);">Dev team</div><div class="t" style="left:1617.00px;top:609.08px;font-size:34.4px;color:#263a5c;transform:scaleX(0.9910);">Alex Carter</div><div class="t" style="left:1860.96px;top:609.08px;font-size:34.4px;color:#263a5c;transform:scaleX(1.0179);">Morgan Blake</div><div class="t" style="left:2326.54px;top:834.90px;font-size:34.5px;color:#ffffff;font-weight:700;transform:scaleX(0.9574);">Save</div><div class="t" style="left:2491.01px;top:834.60px;font-size:34.5px;color:#4a5a76;transform:scaleX(0.9892);">Cancel</div>
<div class="r" style="left:3810px;top:1478.5px;width:150px;height:150px;border-radius:75px;background:#e9f2ff;box-shadow:0 4px 14px rgba(9,30,66,0.35);"></div>
</div></div>
</body></html>
